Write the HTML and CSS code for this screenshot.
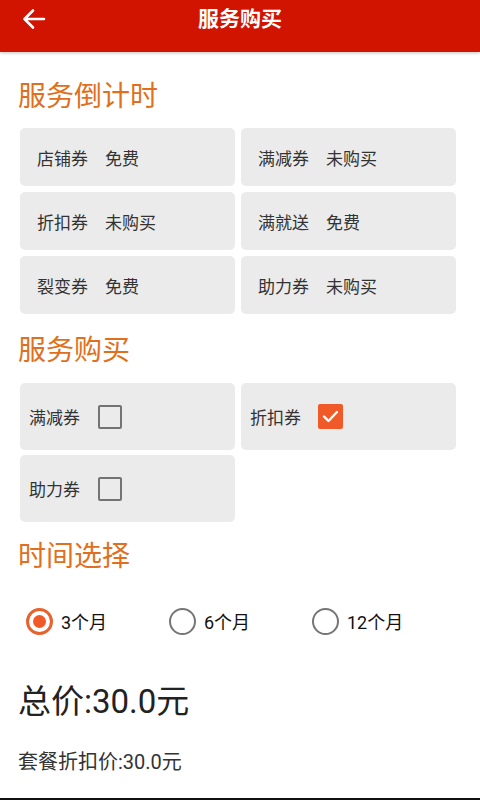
FILE: index.html
```html
<!DOCTYPE html>
<html lang="zh">
<head>
<meta charset="utf-8">
<link rel="stylesheet" href="styles.css">
</head>
<body>
<header class="topbar">
  <svg class="back" width="24" height="22" viewBox="0 0 24 22"><path d="M22 11H3M11 2.5L2.5 11L11 19.5" fill="none" stroke="#fff" stroke-width="2.6" stroke-linecap="round" stroke-linejoin="round"/></svg>
  <div class="title">服务购买</div>
</header>
<main class="content">
  <h2 class="sec">服务倒计时</h2>
  <div class="grid">
    <div class="card"><span class="lbl">店铺券</span><span>免费</span></div>
    <div class="card"><span class="lbl">满减券</span><span>未购买</span></div>
    <div class="card"><span class="lbl">折扣券</span><span>未购买</span></div>
    <div class="card"><span class="lbl">满就送</span><span>免费</span></div>
    <div class="card"><span class="lbl">裂变券</span><span>免费</span></div>
    <div class="card"><span class="lbl">助力券</span><span>未购买</span></div>
  </div>
  <h2 class="sec sec2">服务购买</h2>
  <div class="grid grid2">
    <div class="ccard"><span>满减券</span><span class="box"></span></div>
    <div class="ccard"><span>折扣券</span><span class="box on"><svg width="25" height="25" viewBox="0 0 25 25"><path d="M6 12.5L10.5 17L19 8" fill="none" stroke="#fff" stroke-width="2.4" stroke-linecap="round" stroke-linejoin="round"/></svg></span></div>
    <div class="ccard"><span>助力券</span><span class="box"></span></div>
  </div>
  <h2 class="sec sec3">时间选择</h2>
  <div class="radios">
    <div class="radio"><span class="rc on"></span><span>3个月</span></div>
    <div class="radio"><span class="rc"></span><span>6个月</span></div>
    <div class="radio"><span class="rc"></span><span>12个月</span></div>
  </div>
  <div class="total">总价:30.0元</div>
  <div class="disc">套餐折扣价:30.0元</div>
</main>
</body>
</html>
```
FILE: styles.css
```css
* { box-sizing: border-box; }
html, body { margin: 0; padding: 0; }
body {
  width: 480px;
  height: 800px;
  background: #fff;
  font-family: Roboto, "Noto Sans CJK SC", sans-serif;
  color: #333;
  overflow: hidden;
  border-bottom: 2px solid #111;
}
.topbar {
  height: 52px;
  background: #d01400;
  position: relative;
  box-shadow: 0 1px 3px rgba(0,0,0,0.25);
}
.back {
  position: absolute;
  left: 22px;
  top: 8px;
}
.title {
  text-align: center;
  color: #fff;
  font-size: 21px;
  font-weight: bold;
  line-height: 38px;
}
.content {
  padding: 0 0 0 18px;
}
.sec {
  margin: 0;
  font-weight: normal;
  font-size: 28px;
  color: #e07020;
  line-height: 36px;
  padding-top: 27px;
  height: 76px;
}
.sec2 { padding-top: 19px; height: 69px; }
.sec3 { padding-top: 17px; height: 73px; }
.grid {
  display: grid;
  grid-template-columns: 215px 215px;
  gap: 6px;
  padding-left: 2px;
}
.card {
  height: 58px;
  background: #ebebeb;
  border-radius: 5px;
  display: flex;
  align-items: center;
  padding-left: 17px;
  font-size: 17px;
  color: #333;
}
.lbl { margin-right: 17px; }
.grid2 { gap: 5px 6px; }
.ccard {
  height: 67px;
  background: #ebebeb;
  border-radius: 5px;
  display: flex;
  align-items: center;
  padding-left: 9px;
  font-size: 17px;
  color: #333;
}
.box {
  width: 24px;
  height: 24px;
  border: 2.5px solid #737373;
  border-radius: 2px;
  margin-left: 18px;
  display: block;
}
.box.on {
  width: 25px;
  height: 25px;
  border: none;
  background: #f05a28;
  border-radius: 2px;
  margin-left: 17px;
}
.box.on svg { display: block; }
.radios {
  display: grid;
  grid-template-columns: 143px 143px 143px;
  padding-left: 8px;
  padding-top: 12px;
  height: 87px;
}
.radio {
  display: flex;
  align-items: center;
  height: 28px;
  font-size: 18px;
  color: #111;
}
.rc {
  width: 27px;
  height: 27px;
  border: 2.5px solid #757575;
  border-radius: 50%;
  margin-right: 8px;
  display: flex;
  align-items: center;
  justify-content: center;
}
.rc.on { border: 3px solid #e8622e; }
.rc.on::after {
  content: "";
  width: 13px;
  height: 13px;
  border-radius: 50%;
  background: #f05a28;
}
.total {
  font-size: 33px;
  color: #222;
  line-height: 40px;
  height: 66px;
}
.disc {
  font-size: 20px;
  color: #333;
  line-height: 28px;
}
```
